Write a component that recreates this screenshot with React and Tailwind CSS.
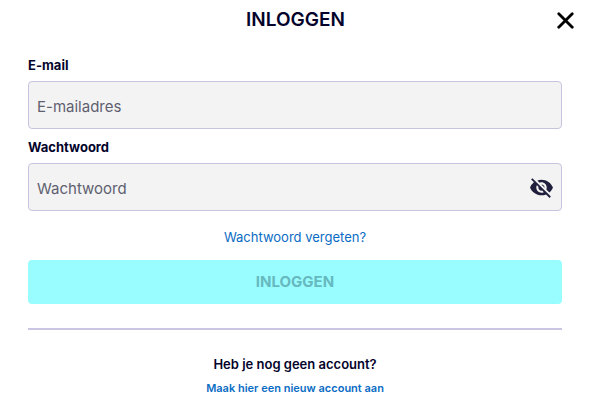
import { useState } from 'react';
import { X } from 'lucide-react';
import { MdVisibility, MdVisibilityOff } from 'react-icons/md';

const inputClass =
    'block w-full h-12 px-2 pt-0.5 rounded border border-[#c5c5e0] bg-[#f3f3f3] text-[15px] text-[#05052d] placeholder:text-[#5f5f70] outline-none focus:border-[#0a6cc4]';

const App = () => {
    const [email, setEmail] = useState('');
    const [password, setPassword] = useState('');
    const [showPassword, setShowPassword] = useState(false);

    return (
        <div className="w-full bg-white font-['Inter','Liberation_Sans',sans-serif] text-[#03032b]">
            {/* Header */}
            <header className="grid grid-cols-[1fr_auto_1fr] items-center h-10 px-3">
                <h1 className="col-start-2 text-[19px] font-semibold">INLOGGEN</h1>
                <button type="button" aria-label="Sluiten" className="justify-self-end text-black">
                    <X size={27} strokeWidth={2.5} />
                </button>
            </header>

            <main className="pl-7 pr-[29px] pt-[15px]">
                <form onSubmit={(e) => e.preventDefault()}>
                    <label htmlFor="email" className="block mb-1.5 text-[13px] leading-5 font-bold">
                        E-mail
                    </label>
                    <input
                        id="email"
                        type="email"
                        value={email}
                        onChange={(e) => setEmail(e.target.value)}
                        className={inputClass}
                        placeholder="E-mailadres"
                    />

                    <label htmlFor="password" className="block mt-2 mb-1.5 text-[13px] leading-5 font-bold">
                        Wachtwoord
                    </label>
                    <div className="relative">
                        <input
                            id="password"
                            type={showPassword ? 'text' : 'password'}
                            value={password}
                            onChange={(e) => setPassword(e.target.value)}
                            className={inputClass}
                            placeholder="Wachtwoord"
                        />
                        <button
                            type="button"
                            aria-label="Toon wachtwoord"
                            onClick={() => setShowPassword(!showPassword)}
                            className="absolute inset-y-0 right-2 flex items-center text-[#1f1f3d]"
                        >
                            {showPassword ? <MdVisibility size={25} /> : <MdVisibilityOff size={25} />}
                        </button>
                    </div>

                    <div className="mt-4 text-center text-[13px] leading-5">
                        <a href="#vergeten" className="text-[#0a6cc4] hover:underline">
                            Wachtwoord vergeten?
                        </a>
                    </div>

                    <button
                        type="submit"
                        disabled
                        className="block w-full h-11 mt-[13px] rounded bg-[#99fdff] text-[15px] font-bold text-[#66b9bf]"
                    >
                        INLOGGEN
                    </button>
                </form>

                <hr className="mt-6 border-t-2 border-[#c9c5e3]" />

                <div className="mt-6 text-center">
                    <p className="text-[13px] leading-5 font-semibold">Heb je nog geen account?</p>
                    <a href="#registreren" className="block mt-1 text-[11px] leading-5 font-semibold text-[#0a6cc4] hover:underline">
                        Maak hier een nieuw account aan
                    </a>
                </div>
            </main>
        </div>
    );
};

export default App;
